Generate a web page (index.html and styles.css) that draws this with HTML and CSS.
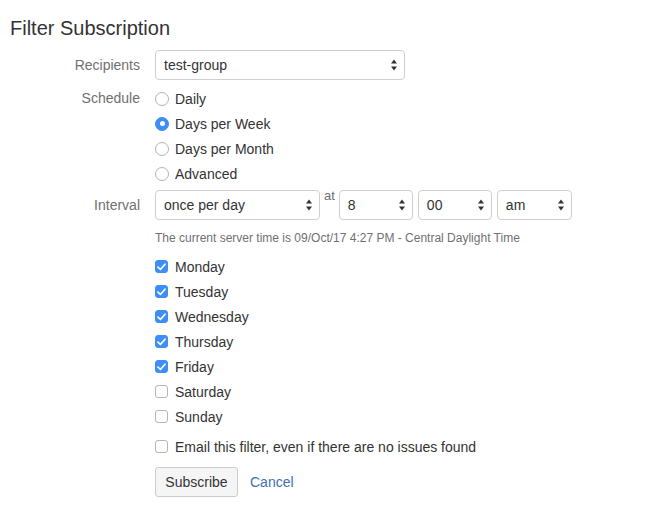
FILE: index.html
```html
<!DOCTYPE html>
<html>
<head>
<meta charset="utf-8">
<link rel="stylesheet" href="styles.css">
</head>
<body>
<div class="page">
  <h2 class="title">Filter Subscription</h2>
  <div class="form">
    <div class="label lbl-select">Recipients</div>
    <div class="field">
      <div class="select sel-recipients"><span>test-group</span><svg class="arrows" width="6" height="12" viewBox="0 0 6 12"><path d="M0 4.6 L3 0.6 L6 4.6 Z M0 7.4 L3 11.4 L6 7.4 Z" fill="#333"/></svg></div>
    </div>

    <div class="label lbl-radio row-schedule">Schedule</div>
    <div class="field row-schedule">
      <div class="opt"><span class="radio"></span>Daily</div>
      <div class="opt"><span class="radio checked"></span>Days per Week</div>
      <div class="opt"><span class="radio"></span>Days per Month</div>
      <div class="opt"><span class="radio"></span>Advanced</div>
    </div>

    <div class="label lbl-select row-interval">Interval</div>
    <div class="field row-interval interval">
      <div class="select sel-interval"><span>once per day</span><svg class="arrows" width="6" height="12" viewBox="0 0 6 12"><path d="M0 4.6 L3 0.6 L6 4.6 Z M0 7.4 L3 11.4 L6 7.4 Z" fill="#333"/></svg></div>
      <span class="at">at</span>
      <div class="select sel-small"><span>8</span><svg class="arrows" width="6" height="12" viewBox="0 0 6 12"><path d="M0 4.6 L3 0.6 L6 4.6 Z M0 7.4 L3 11.4 L6 7.4 Z" fill="#333"/></svg></div>
      <div class="select sel-small"><span>00</span><svg class="arrows" width="6" height="12" viewBox="0 0 6 12"><path d="M0 4.6 L3 0.6 L6 4.6 Z M0 7.4 L3 11.4 L6 7.4 Z" fill="#333"/></svg></div>
      <div class="select sel-small sel-ampm"><span>am</span><svg class="arrows" width="6" height="12" viewBox="0 0 6 12"><path d="M0 4.6 L3 0.6 L6 4.6 Z M0 7.4 L3 11.4 L6 7.4 Z" fill="#333"/></svg></div>
    </div>

    <div class="label"></div>
    <div class="field servertime">The current server time is 09/Oct/17 4:27 PM - Central Daylight Time</div>

    <div class="label"></div>
    <div class="field days">
      <div class="opt"><span class="check checked"><svg width="9" height="8" viewBox="0 0 9 8"><path d="M1 4.2 L3.4 6.5 L8 1.2" fill="none" stroke="#fff" stroke-width="1.7" stroke-linecap="round" stroke-linejoin="round"/></svg></span>Monday</div>
      <div class="opt"><span class="check checked"><svg width="9" height="8" viewBox="0 0 9 8"><path d="M1 4.2 L3.4 6.5 L8 1.2" fill="none" stroke="#fff" stroke-width="1.7" stroke-linecap="round" stroke-linejoin="round"/></svg></span>Tuesday</div>
      <div class="opt"><span class="check checked"><svg width="9" height="8" viewBox="0 0 9 8"><path d="M1 4.2 L3.4 6.5 L8 1.2" fill="none" stroke="#fff" stroke-width="1.7" stroke-linecap="round" stroke-linejoin="round"/></svg></span>Wednesday</div>
      <div class="opt"><span class="check checked"><svg width="9" height="8" viewBox="0 0 9 8"><path d="M1 4.2 L3.4 6.5 L8 1.2" fill="none" stroke="#fff" stroke-width="1.7" stroke-linecap="round" stroke-linejoin="round"/></svg></span>Thursday</div>
      <div class="opt"><span class="check checked"><svg width="9" height="8" viewBox="0 0 9 8"><path d="M1 4.2 L3.4 6.5 L8 1.2" fill="none" stroke="#fff" stroke-width="1.7" stroke-linecap="round" stroke-linejoin="round"/></svg></span>Friday</div>
      <div class="opt"><span class="check"></span>Saturday</div>
      <div class="opt"><span class="check"></span>Sunday</div>
    </div>

    <div class="label"></div>
    <div class="field email">
      <div class="opt"><span class="check"></span>Email this filter, even if there are no issues found</div>
    </div>

    <div class="label"></div>
    <div class="field buttons">
      <button class="btn" type="button">Subscribe</button>
      <a class="cancel" href="#">Cancel</a>
    </div>
  </div>
</div>
</body>
</html>
```

FILE: styles.css
```css
html, body {
  margin: 0;
  padding: 0;
  background: #fff;
}

body {
  font-family: "Liberation Sans", Arial, sans-serif;
  font-size: 14px;
  color: #333;
}

.page {
  padding: 16px 0 0 10px;
}

.title {
  margin: 0;
  font-size: 20px;
  line-height: 24px;
  font-weight: normal;
  color: #333;
}

.form {
  margin-top: 10px;
  display: grid;
  grid-template-columns: 130px 1fr;
  column-gap: 15px;
  align-items: start;
}

.label {
  text-align: right;
  color: #707070;
  font-size: 14px;
}

.lbl-select {
  line-height: 30px;
}

.lbl-radio {
  line-height: 25px;
}

.row-schedule {
  margin-top: 6px;
}

.row-interval {
  margin-top: 4px;
}

.select {
  box-sizing: border-box;
  height: 30px;
  border: 1px solid #cfcfcf;
  border-radius: 4px;
  background: #fff;
  display: flex;
  align-items: center;
  justify-content: space-between;
  padding: 0 7px 0 8px;
  font-size: 14px;
  color: #333;
}

.arrows {
  display: block;
  flex: none;
}

.sel-recipients {
  width: 250px;
}

.interval {
  display: flex;
  align-items: flex-start;
}

.sel-interval {
  width: 165px;
}

.at {
  margin: 0 4px;
  font-size: 13px;
  line-height: 12px;
  color: #707070;
}

.sel-small {
  width: 74px;
  margin-right: 5px;
}

.sel-ampm {
  width: 75px;
  margin-right: 0;
}

.opt {
  display: flex;
  align-items: center;
  height: 25px;
  font-size: 14px;
  color: #333;
}

.radio {
  box-sizing: border-box;
  width: 14px;
  height: 14px;
  border-radius: 50%;
  border: 1px solid #b3b3b3;
  background: #fff;
  margin-right: 6px;
  flex: none;
  display: flex;
  align-items: center;
  justify-content: center;
}

.radio.checked {
  border-color: #3d8ef7;
  background: #3d8ef7;
}

.radio.checked::after {
  content: "";
  width: 5px;
  height: 5px;
  border-radius: 50%;
  background: #fff;
}

.check {
  box-sizing: border-box;
  width: 13px;
  height: 13px;
  border-radius: 3px;
  border: 1px solid #b5b5b5;
  background: #fff;
  margin-right: 7px;
  flex: none;
  display: flex;
  align-items: center;
  justify-content: center;
}

.check.checked {
  border-color: #3d8ef7;
  background: #3d8ef7;
}

.check svg {
  display: block;
}

.servertime {
  margin-top: 10px;
  font-size: 12px;
  line-height: 17px;
  color: #707070;
}

.days {
  margin-top: 7px;
}

.email {
  margin-top: 5px;
}

.buttons {
  margin-top: 8px;
  display: flex;
  align-items: center;
}

.btn {
  box-sizing: border-box;
  width: 83px;
  height: 30px;
  border: 1px solid #ccc;
  border-radius: 3px;
  background: #f5f5f5;
  font-family: "Liberation Sans", Arial, sans-serif;
  font-size: 14px;
  color: #333;
  padding: 0;
}

.cancel {
  margin-left: 12px;
  color: #3b73af;
  text-decoration: none;
  font-size: 14px;
}
```
